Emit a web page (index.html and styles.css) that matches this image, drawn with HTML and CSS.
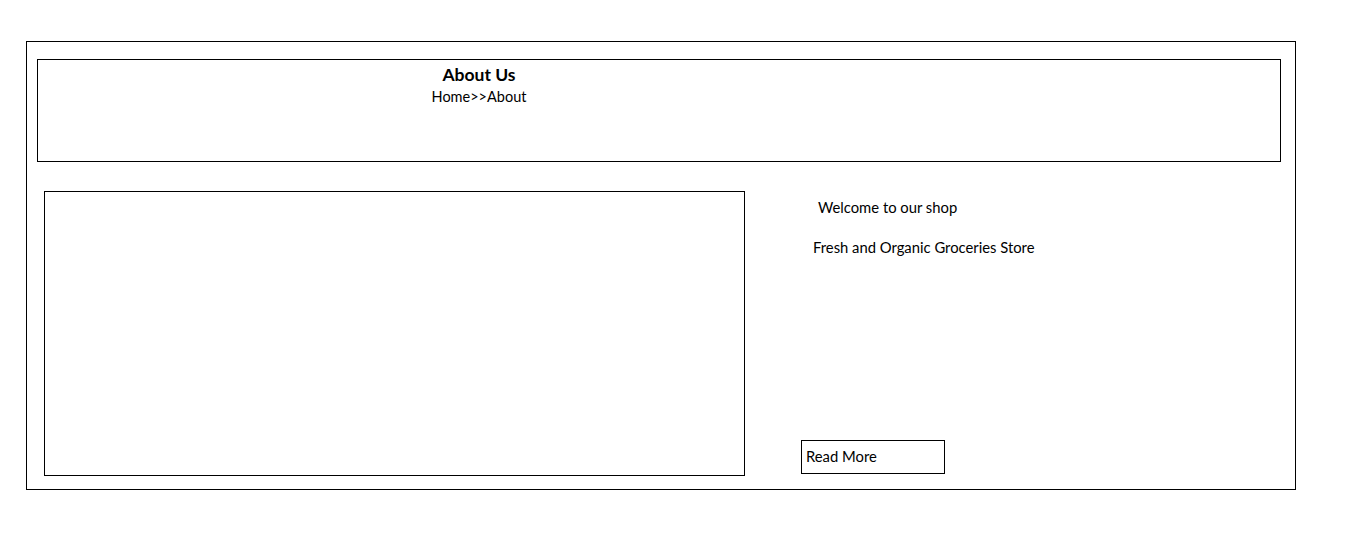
FILE: index.html
```html
<!DOCTYPE html>
<html lang="en">
<head>
<meta charset="utf-8">
<title>About Us</title>
<link rel="stylesheet" href="styles.css">
</head>
<body>
<div class="page">
  <section class="hero">
    <div class="hero-text">
      <h1 class="hero-title">About Us</h1>
      <div class="crumbs">Home&gt;&gt;About</div>
    </div>
  </section>
  <section class="about">
    <div class="about-image"></div>
    <div class="about-info">
      <p class="welcome">Welcome to our shop</p>
      <p class="tagline">Fresh and Organic Groceries Store</p>
      <a class="read-more" href="#">Read More</a>
    </div>
  </section>
</div>
</body>
</html>
```

FILE: styles.css
```css
html, body {
  margin: 0;
  padding: 0;
  background: #fff;
}
body {
  font-family: Lato, "Open Sans", "Liberation Sans", sans-serif;
  font-size: 14.8px;
  line-height: 18px;
  color: #000;
}
.page {
  box-sizing: border-box;
  margin: 41px 0 0 26px;
  width: 1270px;
  height: 449px;
  border: 1px solid #000;
  padding: 17px 14px 0 10px;
}
.hero {
  box-sizing: border-box;
  height: 103px;
  border: 1px solid #000;
  padding-top: 4px;
}
.hero-text {
  width: 882px;
  text-align: center;
}
.hero-title {
  margin: 0;
  font-size: 17.5px;
  line-height: 22px;
  font-weight: bold;
}
.crumbs {
  margin-top: 2px;
  font-size: 14.5px;
}
.about {
  display: flex;
  margin-top: 29px;
  padding-left: 7px;
}
.about-image {
  box-sizing: border-box;
  width: 701px;
  height: 285px;
  border: 1px solid #000;
}
.about-info {
  display: flex;
  flex-direction: column;
  align-items: flex-start;
  margin-left: 56px;
}
.welcome {
  margin: 7px 0 0 17px;
}
.tagline {
  margin: 22px 0 0 12px;
}
.read-more {
  box-sizing: border-box;
  margin-top: auto;
  margin-bottom: 2px;
  width: 144px;
  height: 34px;
  border: 1px solid #000;
  padding: 6px 0 0 4px;
  color: #000;
  text-decoration: none;
}
```
